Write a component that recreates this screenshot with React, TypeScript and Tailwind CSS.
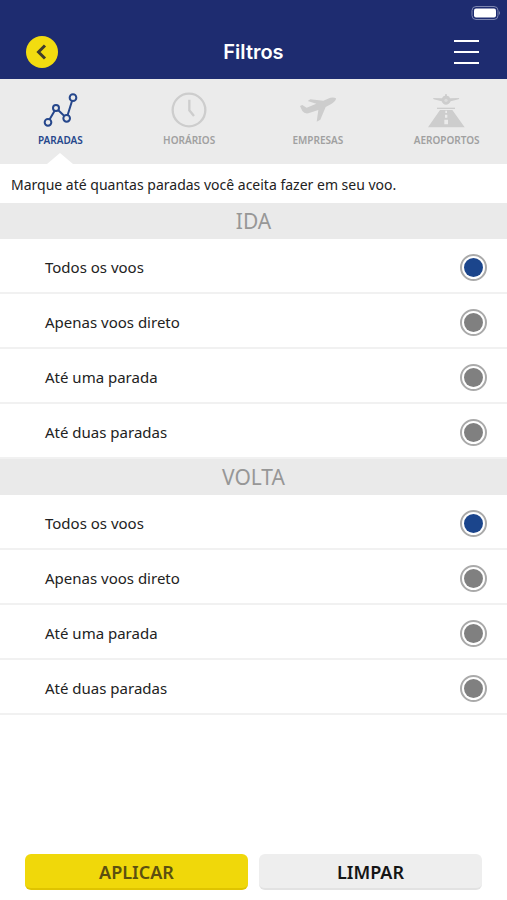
import { useState } from 'react';
import type { ReactNode } from 'react';

const stopOptions = ['Todos os voos', 'Apenas voos direto', 'Até uma parada', 'Até duas paradas'];

function StopsIcon() {
  return (
    <svg viewBox="126 36 112 108" className="h-9" fill="none" stroke="currentColor" strokeWidth="6" aria-hidden="true">
      <circle cx="144" cy="127" r="10" />
      <circle cx="168" cy="84" r="9" />
      <circle cx="200" cy="115" r="10" />
      <circle cx="219" cy="53" r="10" />
      <path d="M149 118 164 92M175 91 193 108M203 105 216 63" />
    </svg>
  );
}

function ClockIcon() {
  return (
    <svg viewBox="514 37 108 108" className="h-9" fill="none" stroke="currentColor" strokeWidth="7" aria-hidden="true">
      <circle cx="568" cy="91" r="49" />
      <path d="M569 60V92L583 109" />
    </svg>
  );
}

function PlaneIcon() {
  return (
    <svg viewBox="138 37 108 108" className="h-9" fill="currentColor" aria-hidden="true">
      <path d="M138 79 145 76 158 84 187 72 161 64 169 59 208 63 229 54Q240 52 246 56Q246 65 233 72L215 82 199 120 188 126 193 91 163 101Q151 103 145 94Z" />
    </svg>
  );
}

function RunwayIcon() {
  return (
    <svg viewBox="526 37 110 108" className="h-9" fill="currentColor" aria-hidden="true">
      <path d="M541 55 568 56Q570 49 577 48L578 43H582L583 48Q591 49 592 56L620 55 618 59 594 65Q589 75 580 75Q571 75 567 65L543 59Z" />
      <circle cx="580" cy="62" r="5" className="fill-[#dcdcdc]" />
      <path d="M553 84H607V88H553Z" />
      <path fillRule="evenodd" d="M562 91H599L636 143H526ZM578 93V100H583V93ZM577 105V114H584V105ZM575 120V134H586V120Z" />
    </svg>
  );
}

const tabs: { label: string; icon: ReactNode }[] = [
  { label: 'PARADAS', icon: <StopsIcon /> },
  { label: 'HORÁRIOS', icon: <ClockIcon /> },
  { label: 'EMPRESAS', icon: <PlaneIcon /> },
  { label: 'AEROPORTOS', icon: <RunwayIcon /> },
];

function StopsGroup({ title, name }: { title: string; name: string }) {
  const [selected, setSelected] = useState(0);
  return (
    <section aria-label={title}>
      <h2 className="flex h-9 items-center justify-center bg-[#eaeaea] pt-0.5 text-[21px] text-[#979797]">{title}</h2>
      {stopOptions.map((option, i) => (
        <label
          key={option}
          className="flex h-[55px] items-center justify-between border-b-2 border-[#f1f1f1] pt-1 pr-5 pl-[45px] text-[15px] text-[#222]"
        >
          {option}
          <input
            type="radio"
            name={name}
            checked={selected === i}
            onChange={() => setSelected(i)}
            className="size-[27px] appearance-none rounded-full border-2 border-[#aaa] bg-[#808080] bg-clip-content p-0.5 checked:bg-[#1b458c]"
          />
        </label>
      ))}
    </section>
  );
}

export default function App() {
  const [active, setActive] = useState(0);
  return (
    <div className="flex min-h-screen flex-col bg-white font-['Noto_Sans','Open_Sans',sans-serif]">
      <header className="bg-[#1e2c70] pb-[5px]">
        <div className="flex h-[30px] justify-end pt-1.5 pr-1.5">
          <svg viewBox="0 0 30 14" className="h-3.5" aria-hidden="true">
            <rect x="1" y="0.5" width="26" height="13" rx="4" fill="none" stroke="#7d86b0" />
            <rect x="3" y="2.5" width="22" height="9" rx="2" fill="#fff" />
            <path d="M28 5Q30 7 28 9Z" fill="#7d86b0" />
          </svg>
        </div>
        <div className="grid grid-cols-3 items-center px-[26px]">
          <button type="button" aria-label="Voltar" className="flex size-8 items-center justify-center rounded-full bg-[#f2dc10] text-[#3f3d2c]">
            <svg viewBox="0 0 32 32" className="size-8" fill="none" stroke="currentColor" strokeWidth="3" aria-hidden="true">
              <path d="M19 9.5 12.5 16 19 22.5" />
            </svg>
          </button>
          <h1 className="text-center font-['Inter',sans-serif] text-xl font-semibold text-white">Filtros</h1>
          <button type="button" aria-label="Menu" className="flex h-11 items-center justify-self-end text-white">
            <svg viewBox="0 0 28 28" className="size-7" stroke="currentColor" strokeWidth="2" aria-hidden="true">
              <path d="M1 3H26M1 14H26M1 25H26" />
            </svg>
          </button>
        </div>
      </header>

      <nav className="overflow-hidden bg-[#ebebeb]">
        <div className="-mx-1 grid grid-cols-4">
          {tabs.map((tab, i) => (
            <button
              key={tab.label}
              type="button"
              onClick={() => setActive(i)}
              className={`relative flex h-[85px] flex-col items-center gap-1 pt-[13px] ${active === i ? 'text-[#26478c]' : 'text-[#cdcdcd]'}`}
            >
              {tab.icon}
              <span className={`text-[10px] leading-4 font-semibold ${active === i ? '' : 'text-[#a0a0a0]'}`}>{tab.label}</span>
              {active === i && (
                <span className="absolute bottom-0 size-0 border-x-[13px] border-b-[11px] border-x-transparent border-b-white" />
              )}
            </button>
          ))}
        </div>
      </nav>

      <main>
        <p className="flex min-h-[39px] items-center px-[11px] pt-0.5 text-sm text-[#222]">
          Marque até quantas paradas você aceita fazer em seu voo.
        </p>
        <StopsGroup title="IDA" name="ida" />
        <StopsGroup title="VOLTA" name="volta" />
      </main>

      <footer className="mt-auto grid grid-cols-2 gap-[11px] px-[25px] pb-2.5 text-lg font-semibold">
        <button type="button" className="h-9 rounded-md border-b-2 border-[#dfc400] bg-[#f0d80a] pt-0.5 text-[#5c5010]">
          APLICAR
        </button>
        <button type="button" className="h-9 rounded-md border-b-2 border-[#e2e2e2] bg-[#eee] pt-0.5 text-[#151515]">
          LIMPAR
        </button>
      </footer>
    </div>
  );
}
